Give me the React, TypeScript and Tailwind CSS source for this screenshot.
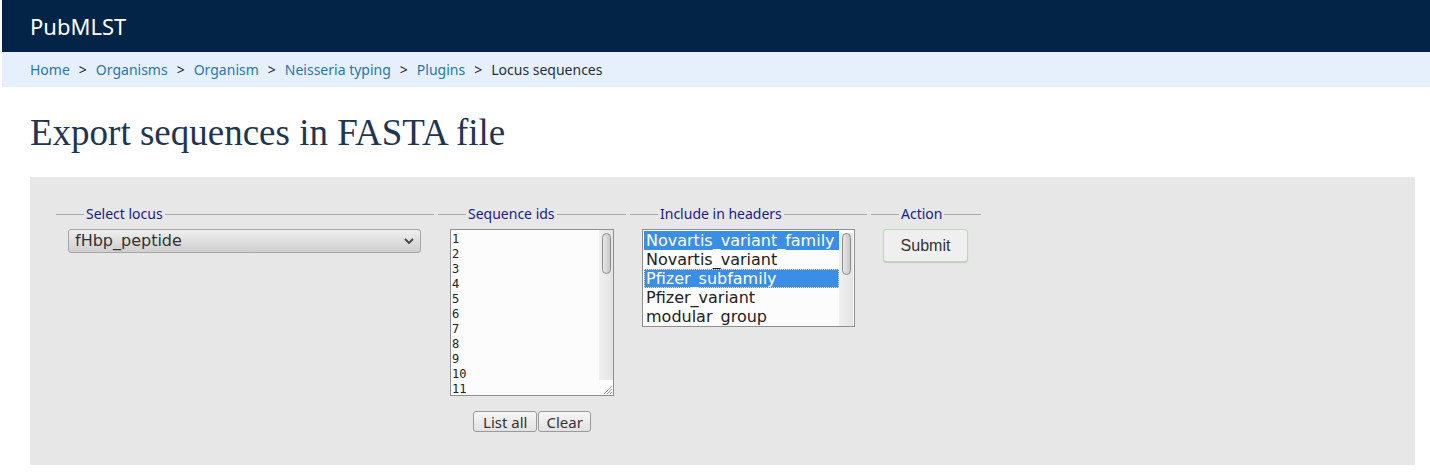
import React from "react"

const crumbs = ["Home", "Organisms", "Organism", "Neisseria typing", "Plugins"]

const headerFields = [
  { name: "Novartis_variant_family", selected: true },
  { name: "Novartis_variant", selected: false },
  { name: "Pfizer_subfamily", selected: true, focused: true },
  { name: "Pfizer_variant", selected: false },
  { name: "modular_group", selected: false },
]

function Fieldset({ legend, width, children }: { legend: string; width: string; children: React.ReactNode }) {
  return (
    <div className={`${width} shrink-0`}>
      <div className="flex items-center h-[16px]">
        <div className="w-[28px] h-px bg-[#a8a8a8]" />
        <span className="px-[2px] text-[14px] leading-[16px] text-[#1a1a8c] font-['Noto_Sans',sans-serif]">{legend}</span>
        <div className="flex-1 h-px bg-[#a8a8a8]" />
      </div>
      <div className="pl-[12px] pt-[7px]">{children}</div>
    </div>
  )
}

function Scrollbar({ thumbTop, thumbHeight }: { thumbTop: string; thumbHeight: string }) {
  return (
    <div className="w-[14px] shrink-0 bg-gradient-to-r from-[#f0f0f0] to-[#e4e4e4] flex flex-col items-center">
      <div className={`${thumbTop} ${thumbHeight} w-[9px] rounded-full border border-[#8c8c8c] bg-gradient-to-r from-[#e8e8e8] to-[#c8c8c8]`} />
    </div>
  )
}

export default function App() {
  return (
    <div className="min-h-[476px] bg-white pl-[2px] font-['Noto_Sans',sans-serif]">
      {/* Top bar */}
      <div className="h-[52px] bg-[#042447] flex items-center pl-[28px]">
        <span className="text-white text-[22px] font-['Noto_Sans',sans-serif]">PubMLST</span>
      </div>

      {/* Breadcrumb */}
      <div className="h-[35px] bg-[#e6f0fc] flex items-center pl-[28px] text-[14px] text-[#1f2f3f]">
        {crumbs.map((c) => (
          <React.Fragment key={c}>
            <a className="text-[#2876ad]">{c}</a>
            <span className="mx-[9px] text-[#222]">&gt;</span>
          </React.Fragment>
        ))}
        <span>Locus sequences</span>
      </div>

      <div className="pl-[28px] pr-[15px]">
        <h1 className="mt-[24px] mb-[22px] text-[37px] leading-[44px] text-[#1e3553] font-['Liberation_Serif',serif]">
          Export sequences in FASTA file
        </h1>

        {/* Form panel */}
        <div className="bg-[#e7e7e7] h-[288px] pl-[26px] pt-[29px] flex gap-[4px]">
          <Fieldset legend="Select locus" width="w-[378px]">
            <div className="w-[353px] h-[24px] rounded-[3px] border border-[#a6a6a6] bg-gradient-to-b from-[#efefef] to-[#cfcfcf] flex items-center justify-between pl-[6px] pr-[4px] font-['DejaVu_Sans',sans-serif] text-[16px] text-[#333]">
              <span>fHbp_peptide</span>
              <svg width="14" height="14" viewBox="0 0 14 14" fill="none">
                <path d="M3 5 L7 9 L11 5" stroke="#444" strokeWidth="1.8" />
              </svg>
            </div>
          </Fieldset>

          <Fieldset legend="Sequence ids" width="w-[188px]">
            <div className="w-[164px] h-[167px] border border-[#8f8f8f] bg-[#fcfcfc] flex relative">
              <div className="flex-1 pl-[1px] pt-[2px] font-['DejaVu_Sans_Mono',monospace] text-[12px] leading-[15px] text-[#222] overflow-hidden">
                {Array.from({ length: 11 }, (_, i) => (
                  <div key={i}>{i + 1}</div>
                ))}
              </div>
              <div className="h-[150px] flex">
                <Scrollbar thumbTop="mt-[3px]" thumbHeight="h-[41px]" />
              </div>
              <svg className="absolute right-0 bottom-0" width="12" height="12" viewBox="0 0 12 12">
                <path d="M11 3 L3 11 M11 6 L6 11 M11 9 L9 11" stroke="#9a9a9a" strokeWidth="1" />
              </svg>
            </div>
            <div className="flex justify-center pr-[12px] mt-[15px] text-[15px] text-[#333]">
              <button className="h-[21px] px-[9px] rounded-[3px] border border-[#9a9a9a] bg-gradient-to-b from-[#f6f6f6] to-[#e2e2e2] leading-[18px]">List all</button>
              <button className="h-[21px] px-[7px] rounded-[3px] border border-[#9a9a9a] bg-gradient-to-b from-[#f6f6f6] to-[#e2e2e2] leading-[18px] ml-px">Clear</button>
            </div>
          </Fieldset>

          <Fieldset legend="Include in headers" width="w-[237px]">
            <div className="w-[213px] h-[98px] border border-[#8f8f8f] bg-[#fcfcfc] flex p-px">
              <div className="flex-1 font-['DejaVu_Sans',sans-serif] text-[16px] leading-[19px] overflow-hidden">
                {headerFields.map((f) => (
                  <div
                    key={f.name}
                    className={`pl-[2px] h-[19px] whitespace-nowrap ${f.selected ? "bg-[#3b8ee6] text-white" : "text-[#222]"} ${f.focused ? "outline outline-1 outline-dotted outline-[#dfe9f8] -outline-offset-1" : ""}`}
                  >
                    {f.name}
                  </div>
                ))}
              </div>
              <div className="flex h-[95px] pt-[2px]">
                <Scrollbar thumbTop="mt-0" thumbHeight="h-[42px]" />
              </div>
            </div>
          </Fieldset>

          <Fieldset legend="Action" width="w-[110px]">
            <button className="w-[85px] h-[33px] rounded-[3px] border border-[#b6dcb0] bg-[#efefef] shadow-[0_1px_1px_rgba(0,0,0,0.15)] font-['Liberation_Sans',sans-serif] text-[16px] text-[#333]">
              Submit
            </button>
          </Fieldset>
        </div>
      </div>
    </div>
  )
}
